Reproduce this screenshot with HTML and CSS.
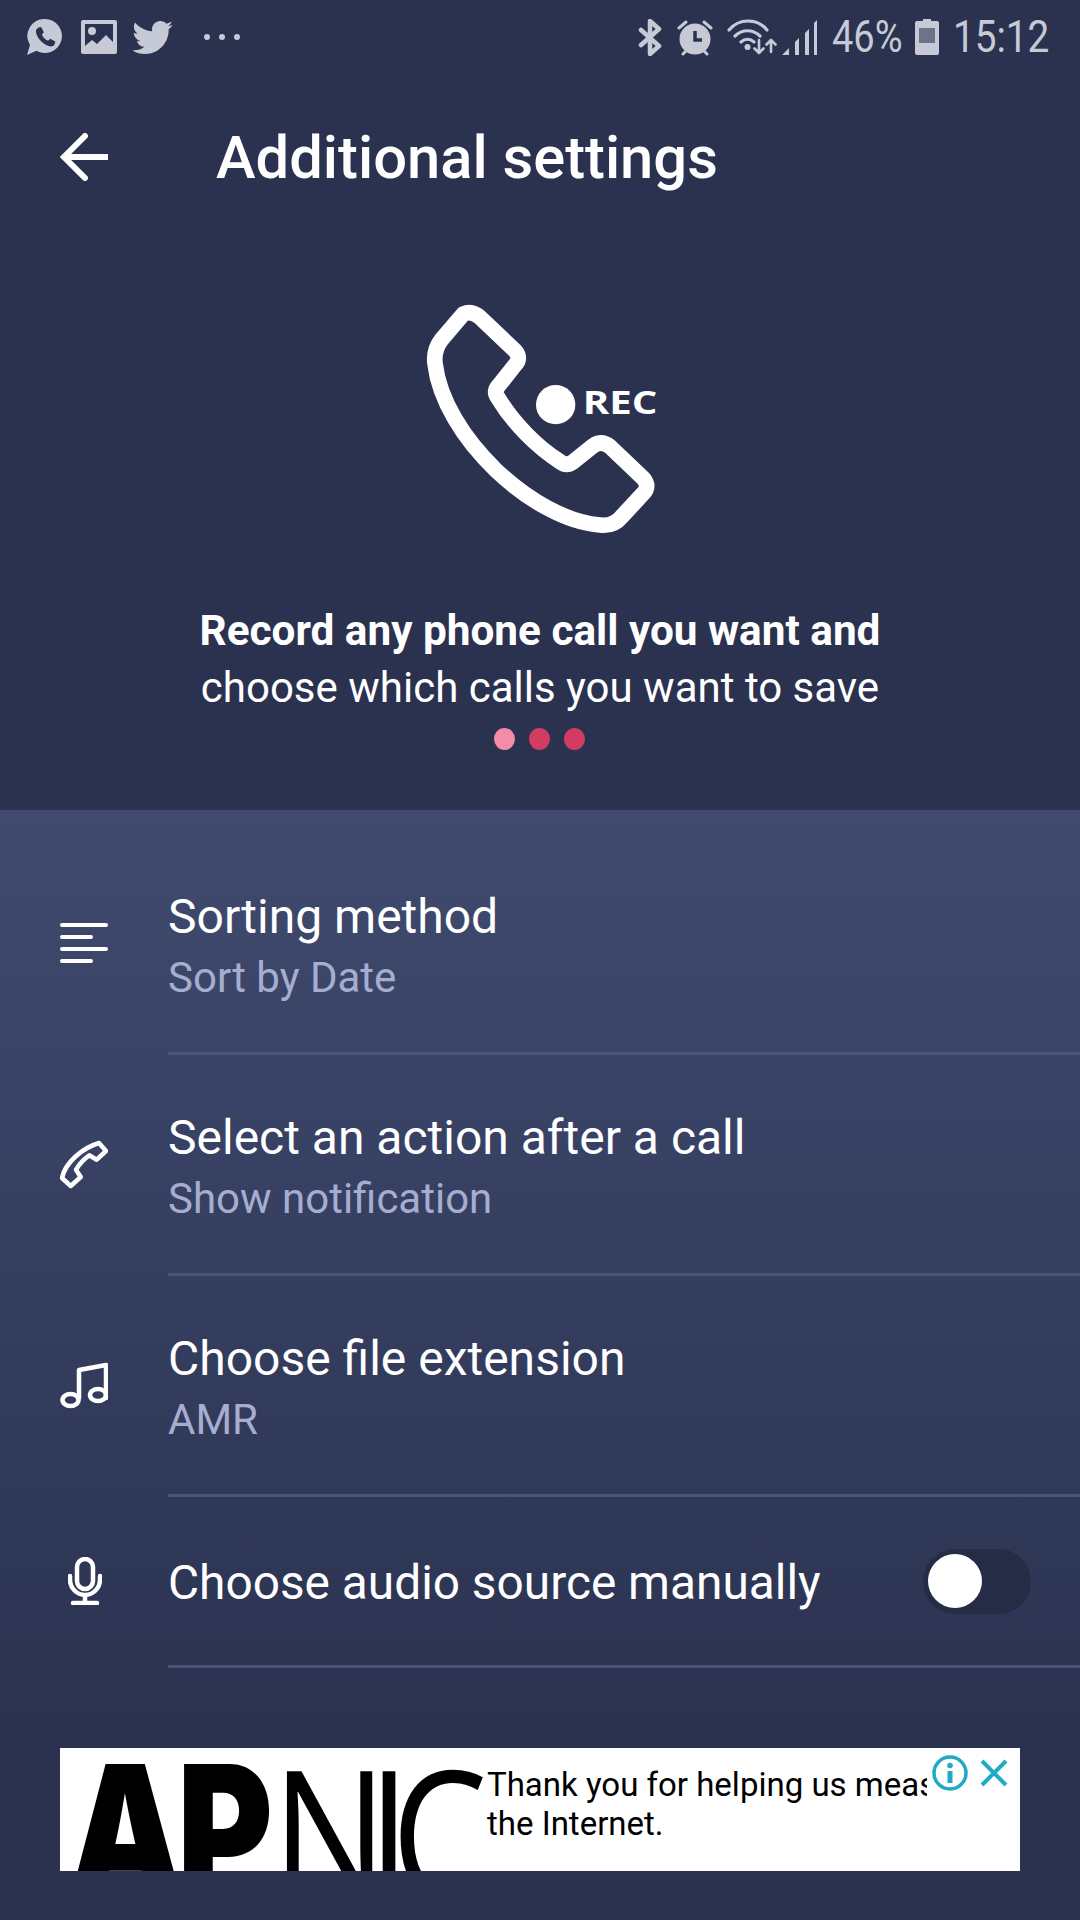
FILE: index.html
```html
<!DOCTYPE html>
<html lang="en">
<head>
<meta charset="utf-8">
<title>Additional settings</title>
<link rel="stylesheet" href="styles.css">
</head>
<body>
<div class="screen">
  <div class="status">
    <div class="status-left">
      <svg class="ic-wa" viewBox="0 0 40 40"><path class="fill" d="M21 2a17 17 0 1 1-8.600 31.700L3 38l3-10A17 17 0 0 1 21 2z"/><path class="dark" d="M14.500 10.500l2.600-.6 2.800 5.300-2 2.300c1 2.800 3.400 5.200 6.100 6.300l2.300-2 5 2.700-.7 2.700c-1 1.800-3 2.600-5 2.100-6.500-1.600-12.300-7.500-13.600-14-.4-1.900.5-3.800 2.500-4.800z"/></svg>
      <svg class="ic-img" viewBox="0 0 36 34"><path class="fill" fill-rule="evenodd" d="M2 0h32a2 2 0 0 1 2 2v30a2 2 0 0 1-2 2H2a2 2 0 0 1-2-2V2a2 2 0 0 1 2-2zM4 4v22l7-6 5 4 9-9 7 7V4z"/><circle class="fill" cx="11" cy="11" r="4"/></svg>
      <svg class="ic-tw" viewBox="2 4 20.500 17"><path class="fill" d="M22.460 6c-.77.35-1.600.58-2.460.69.88-.53 1.560-1.370 1.880-2.380-.83.5-1.750.85-2.720 1.050C18.370 4.500 17.260 4 16 4c-2.350 0-4.270 1.920-4.270 4.290 0 .34.04.67.11.98C8.280 9.090 5.110 7.380 3 4.790c-.37.63-.58 1.370-.58 2.150 0 1.490.75 2.810 1.910 3.560-.71 0-1.370-.2-1.950-.5v.03c0 2.080 1.480 3.820 3.440 4.210a4.220 4.220 0 0 1-1.930.07 4.280 4.280 0 0 0 4 2.980 8.521 8.521 0 0 1-5.330 1.840c-.34 0-.68-.02-1.020-.06C3.440 20.290 5.700 21 8.120 21 16 21 20.330 14.460 20.330 8.790c0-.19 0-.37-.01-.56.84-.6 1.560-1.360 2.140-2.230z"/></svg>
      <div class="more"><i></i><i></i><i></i></div>
    </div>
    <div class="status-right">
      <svg class="ic-bt" viewBox="0 0 24 37"><path class="line" d="M3 11l18 16-9 8V2l9 8L3 26" stroke-width="4.500"/></svg>
      <svg class="ic-alarm" viewBox="0 0 36 37"><circle class="fill" cx="18" cy="20" r="15.500"/><path class="dark-line" d="M18 12v9h7" stroke-width="3.500"/><path class="line" d="M2 9l7-6M34 9l-7-6M6 35l3-3M30 35l-3-3" stroke-width="3"/></svg>
      <svg class="ic-wifi" viewBox="0 0 50 36"><path class="line" d="M2 11C12-1 30-1 40 11M8 17c7-7 18-7 25 0M14 23c4-3.500 9-3.500 13 0" stroke-width="3.200"/><circle class="fill" cx="20.500" cy="28" r="3"/><path class="line" d="M32 21v13M27.500 29.500l4.500 4.500 4.500-4.500M44 33V21M39.500 25.500l4.500-4.500 4.500 4.500" stroke-width="2.600"/></svg>
      <svg class="ic-signal" viewBox="0 0 35 36"><path class="fill" d="M0 36l7-7v7zM13 23l4-4v17h-4zM23 14l4-4v26h-4zM32 4l3-3v35h-3z"/></svg>
      <span class="pct">46%</span>
      <svg class="ic-batt" viewBox="0 0 24 36"><path class="fill" d="M8 0h8v2h6a2 2 0 0 1 2 2v30a2 2 0 0 1-2 2H2a2 2 0 0 1-2-2V4a2 2 0 0 1 2-2h6z"/><rect class="batt-empty" x="4" y="9" width="16" height="15"/></svg>
      <span class="time">15:12</span>
    </div>
  </div>

  <div class="appbar">
    <svg class="ic-back" viewBox="0 0 48 48"><path d="M47 24H4M25 3L4 24l21 21"/></svg>
    <h1>Additional settings</h1>
  </div>

  <div class="hero">
    <svg class="hero-icon" viewBox="0 0 840 810">
      <path class="hero-phone" d="M190 102Q215 90 240 112L345 212Q365 235 345 255L295 318Q280 335 293 352C340 430 410 500 480 545Q500 560 520 545L580 497Q605 480 630 500L730 595Q750 618 730 640L665 710Q640 740 600 735C400 720 130 470 105 250Q100 210 125 178Z"/>
      <circle class="hero-dot" cx="467" cy="374" r="59"/>
      <text class="hero-rec" x="548" y="403" textLength="224" lengthAdjust="spacingAndGlyphs">REC</text>
    </svg>
    <p class="hero-text"><b>Record any phone call you want and</b><br>choose which calls you want to save</p>
    <div class="dots"><i class="on"></i><i></i><i></i></div>
  </div>

  <div class="panel">
    <div class="row">
      <div class="row-icon"><svg class="ic-sort" viewBox="0 0 48 40"><path d="M2 2h44M2 14h29M2 26h44M2 38h29"/></svg></div>
      <div class="row-body"><div class="row-text"><div class="row-title">Sorting method</div><div class="row-sub">Sort by Date</div></div></div>
    </div>
    <div class="row">
      <div class="row-icon"><svg class="ic-call" viewBox="0 0 48 50"><path d="M39 4L46 12 36.700 20.700 29.300 16.300Q21 22 16 30.700L20.700 38 10.700 47 2 39C5 24 22 9 39 4Z"/></svg></div>
      <div class="row-body"><div class="row-text"><div class="row-title">Select an action after a call</div><div class="row-sub">Show notification</div></div></div>
    </div>
    <div class="row">
      <div class="row-icon"><svg class="ic-music" viewBox="0 0 48 48"><path d="M19 37V9L46 4v33"/><ellipse cx="10.500" cy="39" rx="8" ry="6"/><ellipse cx="38" cy="34" rx="8" ry="6"/></svg></div>
      <div class="row-body"><div class="row-text"><div class="row-title">Choose file extension</div><div class="row-sub">AMR</div></div></div>
    </div>
    <div class="row row-short">
      <div class="row-icon"><svg class="ic-mic" viewBox="0 0 34 48"><rect x="9" y="2" width="16" height="30" rx="8"/><path d="M2 19v4c0 8 7 15 15 15s15-7 15-15v-4M17 38v8M5 46h24"/></svg></div>
      <div class="row-body"><div class="row-title">Choose audio source manually</div><div class="toggle"><span class="knob"></span></div></div>
    </div>

    <div class="ad">
      <div class="ad-logo"><span class="ap">AP</span><span class="nic">NIC</span></div>
      <div class="ad-copy"><span class="ad-line">Thank you for helping us measure</span><span class="ad-line">the Internet.</span></div>
      <div class="ad-controls">
        <svg class="ic-info" viewBox="0 0 36 36"><circle cx="18" cy="18" r="16"/><circle class="info-dot" cx="18" cy="10.500" r="2.800"/><path d="M18 16v12" stroke-width="5"/></svg>
        <svg class="ic-x" viewBox="0 0 28 28"><path d="M2 2l24 24M26 2L2 26"/></svg>
      </div>
    </div>
  </div>
</div>
</body>
</html>
```

FILE: styles.css
```css
* { box-sizing: border-box; }
html, body { margin: 0; padding: 0; }
body { width: 1080px; height: 1920px; overflow: hidden; font-family: Roboto, "Liberation Sans", sans-serif; }
.screen { width: 1080px; height: 1920px; display: flex; flex-direction: column; background: #2b3250; color: #fff; }
svg { display: block; flex: none; }
.fill { fill: #c6cad6; }
.dark { fill: #2b3250; }
.line { fill: none; stroke: #c6cad6; stroke-linecap: round; stroke-linejoin: round; }
.dark-line { fill: none; stroke: #2b3250; }

.status { height: 74px; display: flex; justify-content: space-between; align-items: center; padding: 0 32px 0 24px; flex: none; }
.status-left, .status-right { display: flex; align-items: center; }
.ic-wa { width: 40px; height: 40px; }
.ic-img { width: 36px; height: 34px; margin-left: 17px; }
.ic-tw { width: 40px; height: 33px; margin-left: 16px; }
.more { display: flex; gap: 9px; margin-left: 31px; }
.more i { width: 6px; height: 6px; border-radius: 50%; background: #c6cad6; }
.ic-bt { width: 24px; height: 37px; }
.ic-alarm { width: 36px; height: 37px; margin-left: 15px; }
.ic-wifi { width: 50px; height: 36px; margin-left: 14px; }
.ic-signal { width: 35px; height: 36px; margin-left: 5px; }
.pct { width: 70px; margin-left: 15px; font-size: 45px; line-height: 50px; color: #c6cad6; transform: scaleX(.845); transform-origin: left center; white-space: nowrap; }
.ic-batt { width: 24px; height: 36px; margin-left: 13px; }
.batt-empty { fill: #6e7389; }
.time { width: 95px; margin-left: 14px; font-size: 45px; line-height: 50px; color: #c6cad6; transform: scaleX(.86); transform-origin: left center; white-space: nowrap; }

.appbar { height: 168px; display: flex; align-items: center; padding: 0 0 0 60px; flex: none; }
.ic-back { width: 48px; height: 48px; margin-top: -3px; }
.ic-back path { fill: none; stroke: #fff; stroke-width: 6; stroke-linecap: round; stroke-linejoin: miter; }
.appbar h1 { margin: 0 0 0 108px; font-size: 59.700px; font-weight: 500; line-height: 68px; white-space: nowrap; }

.hero { height: 568px; display: flex; flex-direction: column; align-items: center; flex: none; }
.hero-icon { width: 280px; height: 270px; margin-top: 38px; }
.hero-phone { fill: none; stroke: #fff; stroke-width: 47; stroke-linejoin: round; }
.hero-dot { fill: #fff; }
.hero-rec { font-family: "Open Sans", sans-serif; font-size: 97px; font-weight: 700; fill: #fff; }
.hero-text { margin: 52px 0 0; font-size: 42px; line-height: 57px; text-align: center; white-space: nowrap; }
.hero-text b { font-size: 42.300px; font-weight: 700; }
.dots { display: flex; gap: 14px; margin: 12px 2px 0 0; }
.dots i { width: 21px; height: 22px; border-radius: 50%; background: #d23c62; }
.dots i.on { background: #f48ca8; }

.panel { flex: 1; padding-top: 24px; background: linear-gradient(180deg, #3f4a6e 0%, #2b3250 85%); display: flex; flex-direction: column; }
.row { height: 221px; display: flex; flex: none; }
.row-short { height: 171px; }
.row-short .row-title { padding-top: 3px; font-size: 47.800px; }
.row-icon { width: 168px; padding: 0 0 3px 60px; display: flex; align-items: center; flex: none; }
.ic-sort { width: 48px; height: 40px; }
.ic-sort path { fill: none; stroke: #fff; stroke-width: 4; stroke-linecap: round; }
.ic-call { width: 48px; height: 50px; }
.ic-music { width: 48px; height: 48px; }
.ic-call path, .ic-music path, .ic-music ellipse, .ic-mic rect, .ic-mic path { fill: none; stroke: #fff; stroke-width: 4.500; stroke-linejoin: round; stroke-linecap: round; }
.ic-mic { width: 34px; height: 48px; margin-left: 8px; }
.row-body { flex: 1; border-bottom: 3px solid #4a5478; display: flex; align-items: center; justify-content: space-between; padding-right: 49px; }
.row-text { display: flex; flex-direction: column; gap: 10px; padding-top: 6px; }
.row-title { font-size: 48px; line-height: 54px; white-space: nowrap; }
.row-sub { font-size: 42px; line-height: 48px; color: #a5aed0; white-space: nowrap; }
.toggle { width: 108px; height: 65px; border-radius: 33px; background: #252c46; display: flex; align-items: center; padding-left: 5px; }
.knob { width: 54px; height: 54px; border-radius: 50%; background: #fff; }

.ad { width: 960px; height: 123px; margin: 80px 0 0 60px; background: #fff; display: flex; overflow: hidden; flex: none; }
.ad-logo { width: 426px; height: 123px; overflow: hidden; flex: none; display: flex; color: #000; font-size: 182px; line-height: 164px; white-space: nowrap; padding-left: 8px; }
.ap { flex: none; width: 204px; font-family: Inter, sans-serif; font-weight: 900; letter-spacing: -8px; transform: scaleX(.8); transform-origin: left center; }
.nic { flex: none; font-family: "Open Sans", sans-serif; font-weight: 500; letter-spacing: -23px; transform: scaleX(.84); transform-origin: left center; }
.ad-copy { width: 441px; overflow: hidden; padding: 17px 0 0 1px; display: flex; flex-direction: column; color: #000; font-size: 33px; line-height: 39px; flex: none; }
.ad-line { white-space: nowrap; }
.ad-controls { display: flex; align-items: flex-start; padding: 7px 0 0 5px; gap: 12px; }
.ic-info { width: 36px; height: 36px; }
.ic-info circle { fill: none; stroke: #1fabc4; stroke-width: 3.500; }
.ic-info .info-dot { fill: #1fabc4; stroke: none; }
.ic-info path { stroke: #1fabc4; }
.ic-x { width: 28px; height: 28px; margin-top: 4px; }
.ic-x path { stroke: #1fabc4; stroke-width: 4; fill: none; }
```
